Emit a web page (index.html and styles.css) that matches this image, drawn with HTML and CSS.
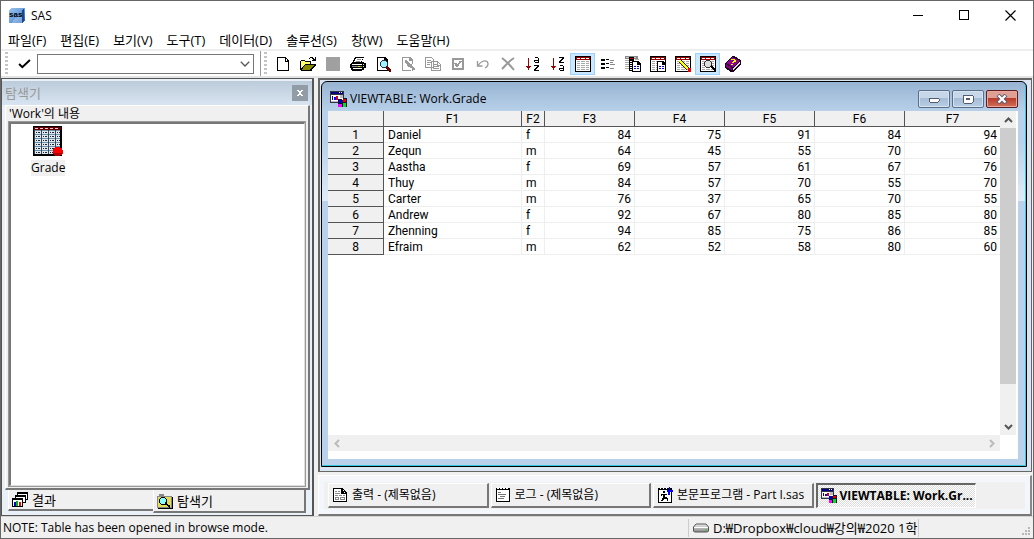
FILE: index.html
```html
<!DOCTYPE html>
<html lang="ko">
<head>
<meta charset="utf-8">
<title>SAS</title>
<link rel="stylesheet" href="styles.css">
</head>
<body>
<svg class="defs" aria-hidden="true">
  <defs>
    <linearGradient id="logo" x1="0" y1="0" x2="1" y2="1"><stop offset="0" stop-color="#9cc4ee"/><stop offset=".5" stop-color="#6da0dc"/><stop offset="1" stop-color="#1c4fa8"/></linearGradient>
    <linearGradient id="drive" x1="0" y1="0" x2="0" y2="1"><stop offset="0" stop-color="#eee"/><stop offset="1" stop-color="#888"/></linearGradient>
    <pattern id="cells" x="2" y="6" width="7" height="4" patternUnits="userSpaceOnUse"><path d="M0 0h7v4H0z" fill="#dfe8ee"/><path d="M0 3h7v1H0z" fill="#7090a8"/><path d="M0 0h1v4H0z" fill="#304858"/><path d="M2 1h1v1H2zM4 1h2v1H4z" fill="#223"/></pattern>
    <symbol id="viewtable" viewBox="0 0 17 17">
      <path d="M0 0h14v12H0z" fill="#334"/><path d="M1 1h12v2H1z" fill="#000080"/><path d="M9 1h1v1H9zM11 1h1v1h-1z" fill="#fff"/><path d="M1 4h12v7H1z" fill="#fff"/>
      <path d="M2 5h1v4H2z" fill="#0000c0"/><path d="M4 6h2v3H4z" fill="#00f"/><path d="M6 5h2v4H6z" fill="#d00"/><path d="M10 4h3v3h-3z" fill="#bbb"/><path d="M1 10h7v1H1z" fill="#bbb"/>
      <path d="M8 8h4v1h1V7h4v9H8z" fill="#113"/><path d="M13 8h3v3h-3z" fill="#e00000"/><path d="M9 9h3v3H9z" fill="#0000c0"/><path d="M8 13h4v3H8z" fill="#f0f"/><path d="M13 12h3v4h-3z" fill="#0d2"/>
    </symbol>
    <symbol id="grid" viewBox="0 0 16 16">
      <path d="M0 0h16v16H0z"/><path d="M1 1h14v3H1z" fill="#900"/><path d="M2 2h3v1H2zM6 2h4v1H6zM11 2h3v1h-3z" fill="#fff"/><path d="M1 4h14v11H1z" fill="#fff"/>
      <path d="M2 5h3v1H2zM2 7h3v1H2zM2 9h3v1H2zM2 11h3v1H2zM2 13h3v1H2zM6 5h4v1H6zM6 7h4v1H6zM6 9h4v1H6zM6 11h4v1H6zM6 13h4v1H6zM11 5h3v1h-3zM11 7h3v1h-3zM11 9h3v1h-3zM11 11h3v1h-3zM11 13h3v1h-3z" fill="#aaa"/>
    </symbol>
    <symbol id="lines" viewBox="0 0 16 16"><path d="M1 3h4v2H1zM1 7h4v2H1zM1 11h4v2H1z"/><path d="M6 3h3v1H6zM6 7h3v1H6zM6 11h3v1H6z"/><path d="M10 4h4v1h-4zM10 8h5v1h-5zM10 12h4v1h-4zM10 6h3v1h-3z" fill="#888"/></symbol>
    <symbol id="page" viewBox="0 0 9 11"><path d="M0 0h6l3 3v8H0z"/><path d="M1 1h4v3h3v6H1z" fill="#fff"/><path d="M2 5h2v1H2zM5 5h2v1H5zM2 7h2v1H2zM5 7h2v1H5z" fill="#00c"/></symbol>
  </defs>
</svg>

<header class="titlebar">
  <svg class="applogo" viewBox="0 0 16 16"><path d="M2 0h13l1 1v11l-3 3H0V2z" fill="url(#logo)"/><path d="M13 2l2-1v11l-2 3z" fill="#1c4690"/><path d="M3 15c2-5 6-7 10-7v7z" fill="#a8c8f0" opacity=".6"/><text x="0" y="9" class="logotext">sas</text></svg>
  <h1>SAS</h1>
  <div class="caption">
    <button aria-label="Minimize"><svg viewBox="0 0 11 11"><path d="M0 5h10v1H0z"/></svg></button>
    <button aria-label="Maximize"><svg viewBox="0 0 11 11"><path d="M.5.5h9v9h-9z" fill="none" stroke="#000"/></svg></button>
    <button aria-label="Close"><svg viewBox="0 0 11 11" class="smooth"><path d="M.5.5l10 10M10.500.5l-10 10" stroke="#000" stroke-width="1.200"/></svg></button>
  </div>
</header>

<nav class="menu">
  <button>파일(F)</button><button>편집(E)</button><button>보기(V)</button><button>도구(T)</button><button>데이터(D)</button><button>솔루션(S)</button><button>창(W)</button><button>도움말(H)</button>
</nav>

<div class="toolbar">
  <i class="grip"></i>
  <button class="check" aria-label="Submit"><svg viewBox="0 0 12 9" class="smooth"><path d="M1 4.500l3 3L11 .8" fill="none" stroke="#000" stroke-width="1.800"/></svg></button>
  <div class="combo">
    <select aria-label="Command"><option></option></select>
    <svg viewBox="0 0 10 6" class="smooth"><path d="M.8.8L5 5 9.200.8" fill="none" stroke="#555" stroke-width="1.300"/></svg>
  </div>
  <i class="rule"></i>
  <i class="grip"></i>
  <div class="tools">
    <button aria-label="New"><svg viewBox="0 0 16 16"><path d="M2 1h9v1h1v1h1v1h1v11H2z"/><path d="M3 2h7v4h3v8H3z" fill="#fff"/><path d="M11 3h1v2h-1z" fill="#fff"/></svg></button>
    <button aria-label="Open"><svg viewBox="0 0 16 16"><path d="M0 14V5h1V4h4v1h6v3h5v1l-4 5v1H1z"/><path d="M1 5h4v1h5v2H5L1 13z" fill="#ff6"/><path d="M5 9h9l-4 5H2z" fill="#888800"/><path d="M9 2h1V1h3v1h1v1h1V1h1v4h-4V4h1V3h-1V2h-2v1H9z"/></svg></button>
    <button aria-label="Save"><svg viewBox="0 0 16 16"><path d="M1 1h14v14H1z" fill="#a0a0a0"/></svg></button>
    <button aria-label="Print"><svg viewBox="0 0 16 16"><path d="M5 1h9v1h-1v2h-1v2h2v1h2v5h-2v2h-2v1H2v-1H1v-2H0V8h1V7h1V6h1V4h1V2h1z"/><path d="M6 2h7l-1 2-1 2H4l1-2zM2 8h10v1H2zM3 12h9v1H3z" fill="#fff"/><path d="M7 3h4v1H7zM6 5h4v1H6zM2 10h10v1H2z" fill="#888"/><path d="M13 8h1v1h-1zM13 10h1v1h-1z" fill="#ddd"/><path d="M8 10h2v1H8z" fill="#dd0"/></svg></button>
    <button aria-label="Print preview"><svg viewBox="0 0 16 16"><path d="M2 1h8l3 3v11H2z"/><path d="M3 2h6v3h3v9H3z" fill="#fff"/><circle cx="9" cy="8" r="3.500" fill="#9df5ff" stroke="#234" /><path d="M11 10h2v1h1v1h1v1h1v3h-2v-1h-1v-1h-1v-1h-1z" fill="#600"/></svg></button>
    <button aria-label="Edit page"><svg viewBox="0 0 16 16" fill="#999"><path d="M2 1h8v1H3v12h8v1H2zM10 1h1v1h1v1h1v5h-1V5H9V1zM12 12h1v3h-1z"/><path d="M5 4h2v1h1v1h1v1h1v1h2v2h1v1h1v1h1v2h-3v-2h-2v-1H8v-1H7V8H6V7H5z"/></svg></button>
    <button aria-label="Copy"><svg viewBox="0 0 16 16" fill="none" stroke="#999"><path d="M.5 1.500h6l2 2v8h-8zM6.500 5.500h6l3 3v6h-9z" fill="#fff"/><path d="M2 4.500h4M2 6.500h4M2 8.500h3M8 8.500h4M8 10.500h6M8 12.500h6M12.500 6v3H15"/></svg></button>
    <button aria-label="Options"><svg viewBox="0 0 16 16" fill="none" stroke="#999"><path d="M3 3h10v10H3z" stroke-width="2"/><path d="M5 7l2 3 4-5" stroke-width="2"/></svg></button>
    <button aria-label="Undo"><svg viewBox="0 0 16 16" class="smooth" fill="none" stroke="#999"><path d="M2.500 5v5h5M3 9.500C6 5 10 4 12 5.500c2 2 1 5-2 6.500" stroke-width="1.300"/></svg></button>
    <button aria-label="Delete"><svg viewBox="0 0 16 16" class="smooth" fill="none" stroke="#999"><path d="M2 2c4 3 8 7 12 12M14 2C9 5 6 9 2 13" stroke-width="2"/></svg></button>
    <button aria-label="Sort ascending"><svg viewBox="0 0 16 16"><path d="M3 2h1v8h2v1H5v1H4v2H3v-2H2v-1H1v-1h2z" fill="#900"/><path d="M10 1h3v1h1v5h-4V6H9V4h4V2h-3zm0 4v1h3V5zM9 9h5v2h-1v1h-1v1h-1v1h3v1H9v-2h1v-1h1v-1h1v-1H9z"/></svg></button>
    <button aria-label="Sort descending"><svg viewBox="0 0 16 16"><path d="M3 2h1v8h2v1H5v1H4v2H3v-2H2v-1H1v-1h2z" fill="#900"/><path d="M9 1h5v2h-1v1h-1v1h-1v1h3v1H9V5h1V4h1V3h1V2H9zM10 9h3v1h1v5h-4v-1H9v-2h4v-2h-3zm0 4v1h3v-1z"/></svg></button>
    <button class="on" aria-label="Table view"><svg viewBox="0 0 16 16"><use href="#grid"/></svg></button>
    <button aria-label="Form view"><svg viewBox="0 0 16 16"><use href="#lines"/></svg></button>
    <button aria-label="Copy table"><svg viewBox="0 0 16 16"><path d="M0 0h13v3H0z" fill="#888"/><path d="M1 1h3v1H1zM8 1h3v1H8z" fill="#ccc"/><path d="M0 4h4v1H0zM0 6h4v1H0zM0 8h4v1H0zM0 10h4v1H0zM0 12h4v1H0zM10 3h4v1h-4z" fill="#aaa"/><path d="M4 1h5v14H4z"/><path d="M5 2h3v1H5z" fill="#c00"/><path d="M5 5h2v1H5zM5 7h2v1H5zM5 9h2v1H5zM5 11h2v1H5zM5 13h2v1H5z" fill="#fff"/><use href="#page" x="7" y="5" width="9" height="11"/></svg></button>
    <button aria-label="Paste table"><svg viewBox="0 0 16 16"><use href="#grid"/><use href="#page" x="7" y="5" width="9" height="11"/></svg></button>
    <button aria-label="Edit mode"><svg viewBox="0 0 16 16"><use href="#grid"/><path d="M5 5l8 8" stroke="#222" stroke-width="3"/><path d="M5 5l8 8" stroke="#ff0" stroke-width="2"/><path d="M13 12h3v4h-3z" fill="#e00"/></svg></button>
    <button class="on" aria-label="Browse mode"><svg viewBox="0 0 16 16"><use href="#grid"/><circle cx="8" cy="8" r="3.500" fill="#ddd" stroke="#333"/><path d="M11 10l5 5" stroke="#000" stroke-width="2"/></svg></button>
    <button aria-label="Help"><svg viewBox="0 0 16 16"><path d="M7 0h2l7 4v5l-8 7H6L0 12V7z" fill="#200020"/><path d="M7 1l8 4-7 6-7-4z" fill="#900090"/><path d="M1 8l6 4v2l-6-3z" fill="#800080"/><path d="M8 12l7-6v2l-7 6z" fill="#ddd"/><path d="M6 3h4v1h1v2H9v1H7V6h1V5h1V4H6zM6 8h2v1H6z" fill="#ff0"/></svg></button>
  </div>
</div>

<main class="workspace">
  <aside class="explorer">
    <div class="dockhead"><h2>탐색기</h2><button aria-label="Close panel"><svg viewBox="0 0 6 6"><path d="M0 0h2v1h2V0h2v1H5v1H4v2h1v1h1v1H4V5H2v1H0V5h1V4h1V2H1V1H0z" fill="#fff"/></svg></button></div>
    <section class="dockbody">
      <p>'Work'의 내용</p>
      <div class="contents">
        <a class="item" href="#grade">
          <svg viewBox="0 0 32 32"><path d="M1 1h29v30H1z"/><path d="M2 2h26v27H2z" fill="url(#cells)"/><path d="M2 2h27v3H2z" fill="#600"/><path d="M3 3h3v1H3zM8 3h3v1H8zM13 3h3v1h-3zM18 3h3v1h-3zM23 3h3v1h-3z" fill="#e8c8c8"/><path d="M23 22h5v1h2v2h1v4h-1v1h-2v1h-5v-1h-1v-1h-1v-5h1v-1h1z" fill="#f00"/><path d="M21 28h9v1h-1v1h-1v1h-5v-1h-1v-1h-1z" fill="#b00000"/></svg>
          <span>Grade</span>
        </a>
      </div>
    </section>
    <div class="tabs">
      <button class="tab"><svg viewBox="0 0 16 16"><path d="M5 0h11v8H5z"/><path d="M6 2h9v5H6z" fill="#fff"/><path d="M7 3h5v1H7z" fill="#888"/><path d="M3 3h11v8H3z"/><path d="M4 5h9v5H4z" fill="#fff"/><path d="M0 6h11v9H0z"/><path d="M1 8h9v6H1z" fill="#fff"/><path d="M2 10h2v4H2z" fill="#00c"/><path d="M4 9h2v5H4z" fill="#0b0"/><path d="M7 10h2v4H7z" fill="#e00"/></svg>결과</button>
      <button class="tab active"><svg viewBox="0 0 16 16"><path d="M0 3h2V1h5v2h8v12H0z" fill="#888"/><path d="M1 4h13v10H1z" fill="#e4dc50"/><path d="M16 4v12H1v-1h14V4z"/><circle cx="6" cy="8" r="3.500" fill="#8ff" stroke="#000"/><path d="M8 10l5 4" stroke="#000" stroke-width="2"/></svg>탐색기</button>
    </div>
  </aside>

  <div class="desk">
    <div class="client">
      <section class="child">
        <header class="childhead">
          <svg viewBox="0 0 17 17"><use href="#viewtable"/></svg><h2>VIEWTABLE: Work.Grade</h2>
          <div class="childbtns">
            <button aria-label="Minimize table"><svg viewBox="0 0 12 10"><rect x="1" y="4" width="10" height="4" rx="1" fill="#fff" stroke="#555a70"/></svg></button>
            <button aria-label="Restore table"><svg viewBox="0 0 12 10"><rect x="1" y="1" width="10" height="8" rx="1" fill="#fff" stroke="#555a70"/><path d="M4.500 4.500h3v1h-3z" fill="none" stroke="#555a70"/></svg></button>
            <button class="close" aria-label="Close table"><svg viewBox="0 0 12 10" class="smooth"><path d="M2 1l8 8M10 1L2 9" stroke="#555a70" stroke-width="4"/><path d="M2.500 1.500l7 7M9.500 1.500l-7 7" stroke="#fff" stroke-width="2.200"/></svg></button>
          </div>
        </header>
        <div class="sheet">
          <div class="tablewrap">
            <table>
              <colgroup><col class="c-no"><col class="c-name"><col class="c-sex"><col class="c-num"><col class="c-num"><col class="c-num"><col class="c-num"><col></colgroup>
              <thead><tr><th></th><th>F1</th><th>F2</th><th>F3</th><th>F4</th><th>F5</th><th>F6</th><th>F7</th></tr></thead>
              <tbody>
                <tr><th>1</th><td>Daniel</td><td>f</td><td>84</td><td>75</td><td>91</td><td>84</td><td>94</td></tr>
                <tr><th>2</th><td>Zequn</td><td>m</td><td>64</td><td>45</td><td>55</td><td>70</td><td>60</td></tr>
                <tr><th>3</th><td>Aastha</td><td>f</td><td>69</td><td>57</td><td>61</td><td>67</td><td>76</td></tr>
                <tr><th>4</th><td>Thuy</td><td>m</td><td>84</td><td>57</td><td>70</td><td>55</td><td>70</td></tr>
                <tr><th>5</th><td>Carter</td><td>m</td><td>76</td><td>37</td><td>65</td><td>70</td><td>55</td></tr>
                <tr><th>6</th><td>Andrew</td><td>f</td><td>92</td><td>67</td><td>80</td><td>85</td><td>80</td></tr>
                <tr><th>7</th><td>Zhenning</td><td>f</td><td>94</td><td>85</td><td>75</td><td>86</td><td>85</td></tr>
                <tr><th>8</th><td>Efraim</td><td>m</td><td>62</td><td>52</td><td>58</td><td>80</td><td>60</td></tr>
              </tbody>
            </table>
          </div>
          <div class="vscroll">
            <button aria-label="Scroll up"><svg viewBox="0 0 9 6" class="smooth"><path d="M1 5l3.500-3.500L8 5" fill="none" stroke="#555" stroke-width="2"/></svg></button>
            <div class="thumb"></div>
            <button aria-label="Scroll down"><svg viewBox="0 0 9 6" class="smooth"><path d="M1 1l3.500 3.500L8 1" fill="none" stroke="#555" stroke-width="2"/></svg></button>
          </div>
          <div class="hscroll">
            <button aria-label="Scroll left"><svg viewBox="0 0 6 9" class="smooth"><path d="M5 1L1.500 4.500 5 8" fill="none" stroke="#bbb" stroke-width="2"/></svg></button>
            <button aria-label="Scroll right"><svg viewBox="0 0 6 9" class="smooth"><path d="M1 1l3.500 3.500L1 8" fill="none" stroke="#bbb" stroke-width="2"/></svg></button>
          </div>
        </div>
      </section>
    </div>
    <div class="windowbar">
      <div class="windows">
        <button><svg viewBox="0 0 16 16"><path d="M1 1h10v1H2v12h12V5h1v10H1z"/><path d="M2 2h8v4h4v8H2z" fill="#fff"/><path d="M10 1h1v1h1v1h1v1h1v1h1v2H9V2h1z"/><path d="M11 3h1v1h-1zM12 5h1v1h-1z" fill="#fff"/><path d="M3 4h2v1H3zM6 4h2v1H6zM3 6h5v1H3zM3 8h3v1H3zM7 8h3v1H7zM11 8h2v1h-2zM3 10h4v3H3zM8 10h5v3H8z" fill="#888"/><path d="M4 11h2v1H4zM9 11h3v1H9z" fill="#fff"/></svg><span>출력 - (제목없음)</span></button>
        <button><svg viewBox="0 0 16 16"><path d="M1 1h14v14H1z"/><path d="M2 3h12v11H2z" fill="#fff"/><path d="M2 0h1v2H2zM5 0h1v2H5zM8 0h1v2H8zM11 0h1v2h-1zM3 1h1v1H3zM6 1h1v1H6zM9 1h1v1H9zM12 1h1v1h-1z" fill="#fff"/><path d="M3 5h3v1H3zM3 7h8v1H3zM5 9h5v1H5zM3 11h6v1H3z" fill="#777"/></svg><span>로그 - (제목없음)</span></button>
        <button><svg viewBox="0 0 16 16"><path d="M1 1h14v15H1z"/><path d="M2 3h12v12H2z" fill="#fff"/><path d="M3 1h1v1H3zM6 1h1v1H6zM9 1h1v1H9z" fill="#fff"/><path d="M6 4h2v2H6zM4 7h6v1H8v2h2v1h1v3h-1v-2H7v1H6v1H4v-1h1v-2h1V8H5v1H4z"/><path d="M10 3h2V0h1v3h3v2h-3v3h-2V5h-1z" fill="#00f"/></svg><span>본문프로그램 - Part I.sas</span></button>
        <button class="pressed"><svg viewBox="0 0 17 17"><use href="#viewtable"/></svg><span>VIEWTABLE: Work.Gr...</span></button>
      </div>
    </div>
  </div>
</main>

<footer class="status">
  <p>NOTE: Table has been opened in browse mode.</p>
  <div class="path"><svg viewBox="0 0 16 10" class="smooth"><path d="M3 1h10l2.500 3v4l-1 1h-13l-1-1V4z" fill="url(#drive)" stroke="#555"/><path d="M1 4.500h14" stroke="#fff"/><path d="M12 7h2" stroke="#3c3"/></svg><span>D:₩Dropbox₩cloud₩강의₩2020 1학기</span></div>
  <svg class="sizer" viewBox="0 0 9 9"><path d="M6 0h2v2H6zM3 3h2v2H3zM6 3h2v2H6zM0 6h2v2H0zM3 6h2v2H3zM6 6h2v2H6z" fill="#b8b8b8"/></svg>
</footer>
</body>
</html>
```
FILE: styles.css
```css
* { box-sizing: border-box; }
body {
  margin: 0;
  height: 100vh;
  display: flex;
  flex-direction: column;
  border: 1px solid #666;
  background: #fff;
  color: #000;
  font: 12px/16px "Open Sans", "Noto Sans CJK KR", sans-serif;
  overflow: hidden;
}
h1, h2, p { margin: 0; font: inherit; }
button { margin: 0; padding: 0; border: 0; background: none; font: inherit; color: inherit; display: flex; align-items: center; justify-content: center; }
svg { display: block; flex: none; shape-rendering: crispEdges; }
svg.smooth { shape-rendering: auto; }
.defs { width: 0; height: 0; position: absolute; }

.titlebar { display: flex; align-items: center; height: 29px; padding-left: 8px; flex: none; }
.applogo { width: 16px; height: 16px; margin-right: 6px; }
.logotext { font: bold 8px "Liberation Sans", sans-serif; fill: #000; }
.caption { display: flex; margin-left: auto; }
.caption button { width: 46px; height: 29px; }
.caption svg { width: 11px; height: 11px; }

.menu { display: flex; gap: 14px; height: 21px; padding: 1px 0 0 7px; border-bottom: 2px solid #eee; font-size: 13px; flex: none; }

.toolbar { display: flex; align-items: center; height: 27px; padding-left: 4px; border-bottom: 2px solid #e4e4e4; flex: none; }
.grip { width: 3px; height: 24px; background: repeating-linear-gradient(#c4c4c4 0 2px, #fff 2px 4px); }
.check { width: 29px; height: 22px; padding-left: 3px; }
.check svg { width: 13px; height: 10px; }
.combo { display: grid; width: 217px; height: 20px; align-items: center; }
.combo select, .combo svg { grid-area: 1 / 1; }
.combo select { appearance: none; width: 100%; height: 20px; border: 1px solid #777; background: #fff; }
.combo svg { width: 10px; height: 6px; justify-self: end; margin-right: 4px; }
.rule { width: 1px; height: 25px; margin: 0 3px 0 6px; background: #999; }
.tools { display: flex; padding-left: 3px; }
.tools button { width: 25px; height: 22px; }
.tools svg { width: 16px; height: 16px; }
.tools .on { background: #cce8ff; border: 1px solid #99d1ff; }

.workspace { flex: 1; min-height: 0; display: flex; gap: 4px; background: #f0f0f0; }

.explorer { display: flex; flex-direction: column; width: 313px; padding: 2px 2px 2px 3px; border: solid #555; border-width: 1px 2px 1px 1px; background: #e9f0f8; flex: none; }
.dockhead { display: flex; justify-content: space-between; align-items: center; height: 24px; margin: 0 -2px 0 -3px; padding: 0 4px 0 3px; background: linear-gradient(#bccbda, #d8e4f1); color: #999; font-size: 13px; flex: none; }
.dockhead button { width: 16px; height: 16px; background: #929ca6; }
.dockhead svg { width: 6px; height: 6px; }
.dockbody { flex: 1; min-height: 0; display: flex; flex-direction: column; padding: 0 3px 2px 3px; border: solid; border-width: 1px 2px 2px 1px; border-color: #fff #777 #777 #fff; background: #f0f0f0; }
.dockbody p { height: 16px; }
.contents { flex: 1; border: solid; border-width: 2px 1px 1px 2px; border-color: #777 #ddd #ddd #777; outline: 1px solid #999; background: #fff; padding: 1px 0 0 20px; }
.item { display: inline-flex; flex-direction: column; align-items: center; color: #000; text-decoration: none; gap: 3px; }
.item svg { width: 32px; height: 32px; }
.item span { background: #f0f0f0; }
.tabs { display: flex; height: 23px; margin: 0 4px 0 3px; font-size: 13px; flex: none; align-items: flex-start; }
.tab { flex: 1 1 145px; justify-content: flex-start; gap: 4px; height: 21px; padding: 1px 0 0 3px; border: solid; border-width: 0 0 2px 1px; border-color: #fff #777 #777 #fff; background: #f0f0f0; }
.tab svg { width: 16px; height: 16px; }
.tab.active { flex-basis: 153px; height: 23px; border-width: 0 2px 2px 1px; }

.desk { flex: 1; min-width: 0; display: flex; flex-direction: column; padding-right: 1px; gap: 3px; }
.client { flex: 1; min-height: 0; display: flex; padding: 1px 4px 4px 1px; border: 2px solid #666; border-right-width: 1px; border-bottom-width: 1px; background: #dbe5f1; }
.child {
  flex: 1; min-width: 0; display: flex; flex-direction: column;
  padding: 0 8px 7px 6px;
  border: 1px solid #000; border-radius: 6px 6px 0 0;
  box-shadow: inset -1px -1px #35c8e0;
  background: linear-gradient(#98b4d2 0, #b9d1ea 30px, #b9d1ea 60px, #e0ebf7 119px, #b9d1ea 119px);
}
.childhead { display: flex; align-items: center; gap: 3px; height: 29px; padding: 5px 2px 0; flex: none; }
.childhead > svg { width: 17px; height: 17px; }
.childbtns { display: flex; gap: 2px; margin: 0 -2px 0 auto; }
.childbtns button { width: 32px; height: 18px; border: 1px solid #5c6f88; border-radius: 2px; box-shadow: inset 0 0 0 1px #d5e2f0; background: linear-gradient(#c6d7e9 45%, #a4bcd6 45%, #b9cee4); }
.childbtns svg { width: 12px; height: 10px; }
.childbtns .close { border-color: #5a1f20; box-shadow: inset 0 0 0 1px #e8a69c; background: linear-gradient(#dfa093 45%, #b93b29 45%, #d07058); }

.sheet { flex: 1; min-height: 0; display: grid; grid-template-columns: minmax(0, 1fr) 16px; grid-template-rows: minmax(0, 1fr) 16px; padding: 0 2px 8px 0; background: #fff; }
.tablewrap { overflow: hidden; }
table { width: 100%; table-layout: fixed; border-collapse: separate; border-spacing: 0; font: 12px/14px Roboto, sans-serif; }
.c-no { width: 56px; }
.c-name { width: 138px; }
.c-sex { width: 23px; }
.c-num { width: 90px; }
th, td { height: 16px; padding: 1px 3px 0 4px; border: solid #eee; border-width: 0 1px 1px 0; font-weight: normal; text-align: right; }
th { padding: 1px 0 0; border-color: #555; background: #f0f0f0; text-align: center; }
td:nth-child(2), td:nth-child(3) { text-align: left; }
tr > :last-child { border-right: 0; }
.vscroll { display: flex; flex-direction: column; background: #f0f0f0; }
.vscroll button { height: 17px; flex: none; }
.vscroll svg { width: 9px; height: 6px; }
.vscroll .thumb { flex: 0 1 256px; background: #cdcdcd; }
.vscroll button:last-child { margin-top: auto; }
.hscroll { display: flex; justify-content: space-between; background: #f0f0f0; }
.hscroll button { width: 17px; }
.hscroll svg { width: 6px; height: 9px; }

.windowbar { padding: 6px 5px 5px; border: solid; border-width: 1px 2px 2px 1px; border-color: #fff #888 #777 #fff; background: #f3f7fc; flex: none; }
.windows { display: flex; gap: 2px; padding: 1px 49px 1px 4px; background: #f0f0f0; }
.windows button { flex: 1; min-width: 0; justify-content: flex-start; gap: 4px; height: 25px; padding: 0 2px 0 3px; border: solid; border-width: 1px 2px 2px 1px; border-color: #fff #777 #777 #fff; background: #f0f0f0; }
.windows svg { width: 16px; height: 16px; }
.windows span { white-space: nowrap; }
.windows .pressed { gap: 3px; border-width: 2px 1px 1px 2px; border-color: #666 #fff #fff #666; background: repeating-conic-gradient(#fff 0 25%, #dcdcdc 0 50%) 0 0 / 2px 2px; font-weight: bold; }

.status { display: flex; align-items: center; height: 22px; padding-left: 2px; border-top: 1px solid #d4d4d4; background: #f0f0f0; flex: none; }
.status p { flex: 1; white-space: nowrap; }
.path { display: flex; align-items: center; gap: 4px; width: 231px; height: 18px; padding-left: 4px; border: solid #ccc; border-width: 0 1px; font-size: 13px; white-space: nowrap; overflow: hidden; }
.path svg { width: 16px; height: 10px; }
.sizer { width: 9px; height: 9px; margin: auto 2px 2px 103px; }
```
